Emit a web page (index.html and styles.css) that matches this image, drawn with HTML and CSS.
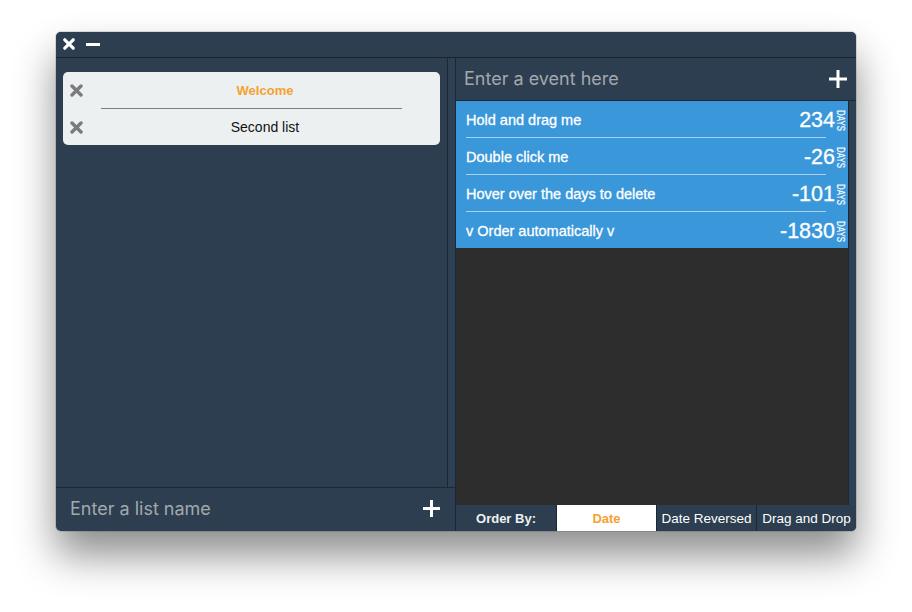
FILE: index.html
```html
<!DOCTYPE html>
<html lang="en">
<head>
<meta charset="utf-8">
<title>Days</title>
<link rel="stylesheet" href="styles.css">
</head>
<body>
<div class="window">
  <header class="titlebar">
    <svg class="tb-close" width="12" height="12" viewBox="0 0 12 12"><path d="M1.8 1.8L10.2 10.2M10.2 1.8L1.8 10.2" stroke="#fff" stroke-width="3.2" stroke-linecap="round"/></svg>
    <span class="tb-min"></span>
  </header>
  <div class="main">
    <section class="left">
      <div class="left-body">
        <div class="lists">
          <div class="card">
            <div class="list-item">
              <svg class="x-icon" width="13" height="13" viewBox="0 0 13 13"><path d="M2 2L11 11M11 2L2 11" stroke="#7b7b7b" stroke-width="3.4" stroke-linecap="round"/></svg>
              <span class="name active">Welcome</span>
            </div>
            <div class="divider"></div>
            <div class="list-item">
              <svg class="x-icon" width="13" height="13" viewBox="0 0 13 13"><path d="M2 2L11 11M11 2L2 11" stroke="#7b7b7b" stroke-width="3.4" stroke-linecap="round"/></svg>
              <span class="name">Second list</span>
            </div>
          </div>
        </div>
        <div class="gutter"></div>
      </div>
      <div class="input-row left-input">
        <span class="placeholder">Enter a list name</span>
        <svg class="plus" width="17" height="17" viewBox="0 0 17 17"><path d="M8.5 0V17M0 8.5H17" stroke="#fff" stroke-width="3"/></svg>
      </div>
    </section>
    <section class="right">
      <div class="input-row event-input">
        <span class="placeholder">Enter a event here</span>
        <svg class="plus" width="18" height="18" viewBox="0 0 18 18"><path d="M9 0V18M0 9H18" stroke="#fff" stroke-width="3"/></svg>
      </div>
      <div class="right-body">
        <div class="events">
          <div class="event-list">
            <div class="event"><span class="title">Hold and drag me</span><span class="count"><span class="num">234</span><span class="unit">DAYS</span></span></div>
            <div class="sep"></div>
            <div class="event"><span class="title">Double click me</span><span class="count"><span class="num">-26</span><span class="unit">DAYS</span></span></div>
            <div class="sep"></div>
            <div class="event"><span class="title">Hover over the days to delete</span><span class="count"><span class="num">-101</span><span class="unit">DAYS</span></span></div>
            <div class="sep"></div>
            <div class="event"><span class="title">v Order automatically v</span><span class="count"><span class="num">-1830</span><span class="unit">DAYS</span></span></div>
          </div>
        </div>
        <div class="gutter"></div>
      </div>
      <div class="orderbar">
        <span class="cell label">Order By:</span>
        <span class="cell selected">Date</span>
        <span class="cell">Date Reversed</span>
        <span class="cell">Drag and Drop</span>
      </div>
    </section>
  </div>
</div>
</body>
</html>
```

FILE: styles.css
```css
* { box-sizing: border-box; }

html, body {
  margin: 0;
  padding: 0;
  background: #ffffff;
  font-family: "Liberation Sans", Arial, sans-serif;
}

body {
  height: 612px;
  padding-top: 32px;
  overflow: hidden;
}

.window {
  width: 800px;
  height: 499px;
  margin-left: 56px;
  display: flex;
  flex-direction: column;
  background: #2c3e50;
  border-radius: 5px;
  overflow: hidden;
  box-shadow: 0 24px 40px rgba(0, 0, 0, 0.45), 0 0 0 1px rgba(0, 0, 0, 0.12);
}

.titlebar {
  height: 26px;
  flex: none;
  display: flex;
  align-items: center;
  padding: 0 0 1px 7px;
  border-bottom: 1px solid #1e2329;
  background: #2c3e50;
}

.tb-close { display: block; margin-right: 11px; }

.tb-min {
  display: block;
  width: 14px;
  height: 3px;
  background: #fff;
  margin-top: 1px;
}

.main {
  flex: 1;
  display: flex;
  min-height: 0;
}

.left {
  width: 400px;
  display: flex;
  flex-direction: column;
  border-right: 1px solid #1c2835;
}

.left-body {
  flex: 1;
  display: flex;
  min-height: 0;
}

.lists {
  flex: 1;
  padding: 14px 7px 0 7px;
}

.gutter {
  width: 8px;
  flex: none;
  border-left: 1px solid #1c2835;
  background: #2e4053;
}

.card {
  background: #ecf0f1;
  border-radius: 5px;
}

.list-item {
  height: 36px;
  display: flex;
  align-items: center;
  padding-left: 7px;
}

.x-icon { display: block; flex: none; margin-right: 7px; }

.name {
  flex: 1;
  text-align: center;
  font-size: 14px;
  color: #111;
}

.name.active {
  font-size: 13px;
  font-weight: bold;
  color: #f5a230;
}

.divider {
  height: 1px;
  margin: 0 38px;
  background: #7d7d7d;
}

.input-row {
  display: flex;
  align-items: center;
  justify-content: space-between;
  flex: none;
}

.placeholder {
  font-family: "Inter", "Noto Sans", sans-serif;
  font-size: 18px;
  color: #a3a8ad;
}

.plus { display: block; flex: none; }

.left-input {
  height: 44px;
  border-top: 1px solid #1c2835;
  padding: 0 15px 2px 14px;
}

.right {
  width: 400px;
  display: flex;
  flex-direction: column;
}

.event-input {
  height: 43px;
  border-bottom: 1px solid #1c2835;
  padding: 0 9px 1px 8px;
}

.right-body {
  flex: 1;
  display: flex;
  min-height: 0;
}

.events {
  flex: 1;
  background: #2d2d2d;
}

.event-list {
  background: #3a97da;
}

.event {
  height: 36px;
  display: flex;
  align-items: center;
  justify-content: space-between;
  padding: 1px 3px 0 10px;
  color: #fff;
  -webkit-text-stroke: 0.3px #fff;
}

.title {
  font-size: 14.5px;
}

.count {
  display: flex;
  align-items: center;
  padding-top: 2px;
}

.num {
  font-size: 21.5px;
  line-height: 1;
}

.unit {
  writing-mode: vertical-rl;
  font-size: 11px;
  line-height: 9px;
  width: 9px;
  margin-left: 1px;
  transform: scaleY(0.72);
  -webkit-text-stroke: 0.2px #fff;
}

.sep {
  height: 1px;
  margin: 0 22px 0 10px;
  background: rgba(255, 255, 255, 0.55);
}

.orderbar {
  height: 26px;
  flex: none;
  display: flex;
  gap: 1px;
  background: #1c2835;
}

.cell {
  width: 99px;
  display: flex;
  align-items: center;
  justify-content: center;
  background: #2c3e50;
  color: #fff;
  font-size: 13.5px;
}

.cell.label {
  width: 100px;
  font-size: 13px;
  font-weight: bold;
  color: #eef0f2;
}

.cell.selected {
  background: #fff;
  color: #f5a230;
  font-size: 13px;
  font-weight: bold;
}
```
